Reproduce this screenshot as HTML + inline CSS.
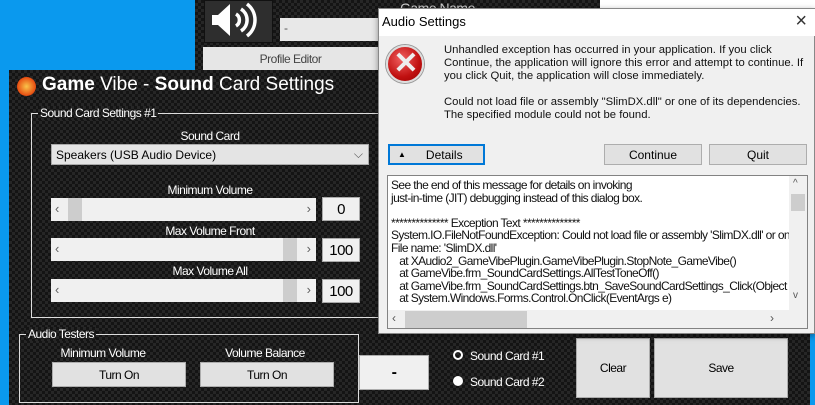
<!DOCTYPE html>
<html><head><meta charset="utf-8"><style>
*{box-sizing:border-box;margin:0;padding:0}
body{width:815px;height:405px;overflow:hidden;position:relative;background:#0a99ee;font-family:"Liberation Sans",sans-serif}
.carbon{background-color:#1b1b1b;background-image:repeating-conic-gradient(#262626 0 25%,#141414 0 50%);background-size:6px 6px}
.abs{position:absolute}
.n{letter-spacing:-0.5px}
.btn{position:absolute;background:#e1e1e1;border:1px solid #adadad;color:#000;display:flex;align-items:center;justify-content:center;font-size:12px}
.lbl{position:absolute;color:#fff;font-size:12px;text-align:center;white-space:nowrap}
.sb{position:absolute;background:#f0f0f0;height:23px}
.sb .t{position:absolute;top:0;height:23px;background:#cdcdcd;width:14px}
.sb .l,.sb .r{position:absolute;top:3px;font-size:13px;color:#606060}
.val{position:absolute;background:#f0f0f0;border:1px solid #aaa;font-size:15px;display:flex;align-items:center;justify-content:center;height:24px;width:38px}
.grp{position:absolute;border:1px solid #ddd}
.grp span{position:absolute;top:-8px;left:6px;color:#fff;font-size:12px;padding:0 2px;line-height:14px}
</style></head><body>
<div class="abs carbon" style="left:195px;top:0;width:620px;height:70px"></div>
<div class="abs" style="left:204px;top:0;width:69px;height:43px;background:#2e2e2e;border:1px solid #111"></div>
<svg class="abs" style="left:210px;top:0" width="56" height="40" viewBox="0 0 56 40"><path d="M2 15h6l12-11v32l-12-11H2z" fill="#fff"/><path d="M26 14a7 7 0 0 1 0 12M31 9a13 13 0 0 1 0 22M37 4a20 20 0 0 1 0 32" stroke="#fff" stroke-width="3.5" fill="none"/></svg>
<div class="abs" style="left:280px;top:18px;width:100px;height:23px;background:#e8e8e8;color:#555;font-size:12px;padding:3px 4px">-</div>
<div class="lbl n" style="left:400px;top:0;font-size:14px;color:#ccc">Game Name</div>
<div class="btn n" style="left:203px;top:47px;width:175px;height:23px;background:#e6e6e6;border:none;color:#444">Profile Editor</div>
<div class="abs" style="left:600px;top:0;width:215px;height:10px;background:#fff"></div>
<div class="abs carbon" style="left:9px;top:70px;width:801px;height:335px"></div>
<div class="abs" style="left:17px;top:77px;width:19px;height:19px;border-radius:50%;background:radial-gradient(#f9c44a,#e64a10 70%,#c3320a)"></div>
<div class="abs" style="left:42px;top:74px;color:#fff;font-size:19px;white-space:nowrap"><b>Game</b> Vibe - <b>Sound</b> Card Settings</div>
<div class="grp" style="left:31px;top:113px;width:560px;height:205px"><span class="n carbon">Sound Card Settings #1</span></div>
<div class="lbl n" style="left:150px;top:129px;width:120px">Sound Card</div>
<div class="abs" style="left:51px;top:144px;width:318px;height:21px;background:#e4e4e4;border:1px solid #aaa;font-size:12px;padding:3px 4px">Speakers (USB Audio Device)<span style="position:absolute;right:5px;top:2px;color:#555">⌵</span></div>
<div class="lbl n" style="left:150px;top:183px;width:120px">Minimum Volume</div>
<div class="sb" style="left:51px;top:198px;width:265px"><span class="l" style="left:4px">‹</span><div class="t" style="left:17px"></div><span class="r" style="right:5px">›</span></div>
<div class="val n" style="left:322px;top:197px">0</div>
<div class="lbl n" style="left:150px;top:224px;width:120px">Max Volume Front</div>
<div class="sb" style="left:51px;top:238px;width:265px"><span class="l" style="left:4px">‹</span><div class="t" style="left:232px"></div><span class="r" style="right:5px">›</span></div>
<div class="val n" style="left:322px;top:238px">100</div>
<div class="lbl n" style="left:150px;top:264px;width:120px">Max Volume All</div>
<div class="sb" style="left:51px;top:279px;width:265px"><span class="l" style="left:4px">‹</span><div class="t" style="left:232px"></div><span class="r" style="right:5px">›</span></div>
<div class="val n" style="left:322px;top:279px">100</div>
<div class="grp" style="left:19px;top:334px;width:340px;height:69px"><span class="n carbon">Audio Testers</span></div>
<div class="lbl n" style="left:53px;top:346px;width:100px">Minimum Volume</div>
<div class="lbl n" style="left:205px;top:346px;width:120px">Volume Balance</div>
<div class="btn n" style="left:52px;top:362px;width:134px;height:25px">Turn On</div>
<div class="btn n" style="left:200px;top:362px;width:134px;height:25px">Turn On</div>
<div class="btn n" style="left:359px;top:355px;width:70px;height:35px;background:#f0f0f0;font-size:16px;font-weight:bold">-</div>
<div class="abs" style="left:453px;top:350px;width:10px;height:10px;border-radius:50%;border:2px solid #fff"></div>
<div class="lbl n" style="left:470px;top:349px">Sound Card #1</div>
<div class="abs" style="left:453px;top:376px;width:10px;height:10px;border-radius:50%;background:#fff"></div>
<div class="lbl n" style="left:470px;top:375px">Sound Card #2</div>
<div class="btn n" style="left:576px;top:338px;width:74px;height:60px">Clear</div>
<div class="btn n" style="left:654px;top:338px;width:134px;height:60px">Save</div>
<div class="abs" style="left:378px;top:8px;width:437px;height:326px;background:#f0f0f0;border:1px solid #888;box-shadow:0 2px 6px rgba(0,0,0,.4)"></div>
<div class="abs" style="left:379px;top:9px;width:436px;height:27px;background:#fff;font-size:13px;padding:5px 3px">Audio Settings<span style="position:absolute;right:8px;top:1px;font-size:20px;font-weight:300;color:#333">×</span></div>
<div class="abs" style="left:386px;top:45px;width:38px;height:38px;border-radius:50%;background:radial-gradient(circle at 40% 35%,#f06060,#c01010 60%,#900);border:2px solid #ddd;box-shadow:0 0 0 1px #999"></div>
<div class="abs" style="left:392px;top:46px;color:#eee;font-size:30px;font-weight:bold;width:28px;text-align:center">✕</div>
<div class="abs" style="left:444px;top:44px;font-size:11.3px;line-height:13px;width:362px;color:#111">Unhandled exception has occurred in your application. If you click Continue, the application will ignore this error and attempt to continue. If you click Quit, the application will close immediately.<br><br>Could not load file or assembly "SlimDX.dll" or one of its dependencies. The specified module could not be found.</div>
<div class="btn" style="left:388px;top:144px;width:97px;height:21px;border:2px solid #0078d7;justify-content:flex-start;padding-left:8px"><span style="font-size:8px;margin-right:20px">▲</span>Details</div>
<div class="btn" style="left:604px;top:144px;width:98px;height:21px">Continue</div>
<div class="btn" style="left:709px;top:144px;width:98px;height:21px">Quit</div>
<div class="abs" style="left:387px;top:175px;width:421px;height:154px;background:#fff;border:1px solid #828282;overflow:hidden;font-size:12px;line-height:12.6px;padding:3px 0 0 3px;white-space:pre;color:#111;letter-spacing:-0.6px">See the end of this message for details on invoking
just-in-time (JIT) debugging instead of this dialog box.

************** Exception Text **************
System.IO.FileNotFoundException: Could not load file or assembly 'SlimDX.dll' or one of
File name: 'SlimDX.dll'
   at XAudio2_GameVibePlugin.GameVibePlugin.StopNote_GameVibe()
   at GameVibe.frm_SoundCardSettings.AllTestToneOff()
   at GameVibe.frm_SoundCardSettings.btn_SaveSoundCardSettings_Click(Object sender
   at System.Windows.Forms.Control.OnClick(EventArgs e)
<div class="abs" style="left:401px;top:0;width:20px;height:154px;background:#f0f0f0;letter-spacing:0"><div class="abs" style="left:2px;top:18px;width:14px;height:17px;background:#cdcdcd"></div><span class="abs" style="left:4px;top:2px;font-size:10px;color:#555">^</span><span class="abs" style="left:4px;top:114px;font-size:10px;color:#555">v</span></div>
<div class="abs" style="left:0;top:134px;width:401px;height:19px;background:#f0f0f0;letter-spacing:0"><div class="abs" style="left:17px;top:1px;width:122px;height:17px;background:#cdcdcd"></div><span class="abs" style="left:4px;top:2px;color:#555">‹</span><span class="abs" style="left:382px;top:2px;color:#555">›</span></div>
</div>
</body></html>
